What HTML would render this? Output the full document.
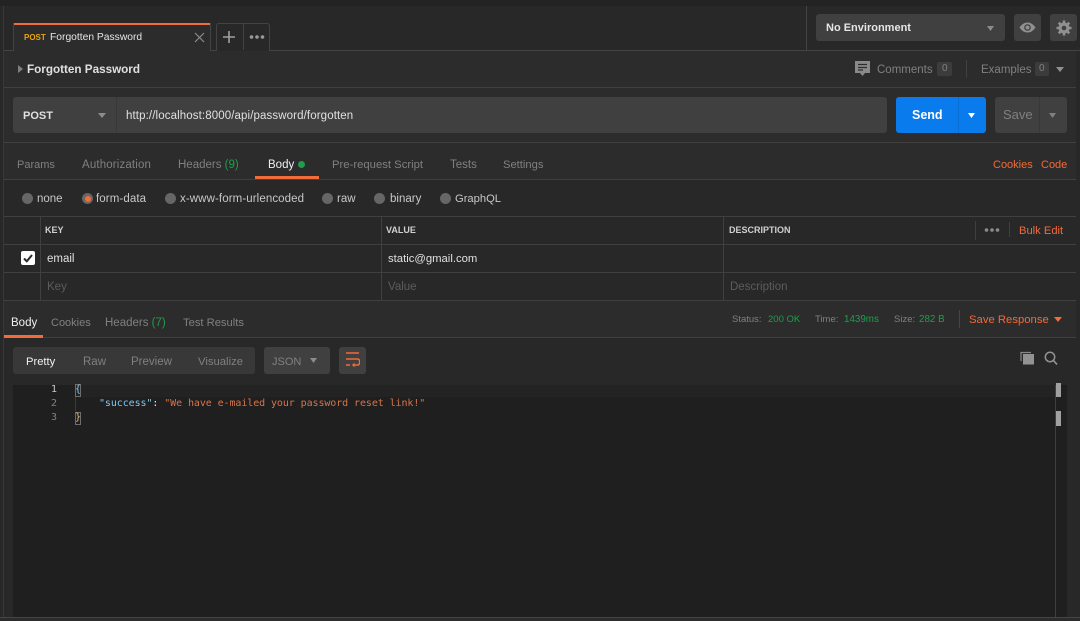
<!DOCTYPE html>
<html><head><meta charset="utf-8">
<style>
*{box-sizing:border-box}
html,body{margin:0;padding:0;width:1080px;height:621px;overflow:hidden;background:#282828}
body{position:relative;font-family:"Liberation Sans",sans-serif;font-size:11.5px;color:#808080}
.b,.t,svg.i{position:absolute}
.t{white-space:nowrap;line-height:14px;height:14px}
.w{color:#f0f0f0}
.o{color:#f26b3a}
.g{color:#1f9e4a}
.d{color:#5c5c5c}
.s{font-weight:bold}
.r{position:absolute;width:11px;height:11px;border-radius:50%;background:#666;top:193px}
.m{font:10px/14px "DejaVu Sans Mono",monospace;letter-spacing:-0.09px}
</style></head><body>
<!-- backgrounds -->
<div class="b" style="left:0;top:0;width:1080px;height:6px;background:#232323"></div>
<div class="b" style="left:0;top:6px;width:1080px;height:44px;background:#282828"></div>
<div class="b" style="left:4px;top:51px;width:1072px;height:129px;background:#2c2c2c"></div>
<div class="b" style="left:4px;top:180px;width:1072px;height:121px;background:#282828"></div>
<div class="b" style="left:4px;top:301px;width:1072px;height:37px;background:#2c2c2c"></div>
<div class="b" style="left:4px;top:338px;width:1072px;height:279px;background:#282828"></div>
<div class="b" style="left:0;top:617px;width:1080px;height:4px;background:#2c2c2c"></div>
<!-- lines -->
<div class="b" style="left:3px;top:6px;width:1px;height:611px;background:#383838"></div>
<div class="b" style="left:4px;top:50px;width:1076px;height:1px;background:#434343"></div>
<div class="b" style="left:806px;top:6px;width:1px;height:44px;background:#434343"></div>
<div class="b" style="left:4px;top:87px;width:1072px;height:1px;background:#404040"></div>
<div class="b" style="left:4px;top:142px;width:1072px;height:1px;background:#404040"></div>
<div class="b" style="left:4px;top:179px;width:1072px;height:1px;background:#404040"></div>
<div class="b" style="left:4px;top:216px;width:1072px;height:1px;background:#404040"></div>
<div class="b" style="left:4px;top:244px;width:1072px;height:1px;background:#404040"></div>
<div class="b" style="left:4px;top:272px;width:1072px;height:1px;background:#404040"></div>
<div class="b" style="left:4px;top:300px;width:1072px;height:1px;background:#404040"></div>
<div class="b" style="left:4px;top:337px;width:1072px;height:1px;background:#404040"></div>
<div class="b" style="left:0;top:617px;width:1080px;height:1px;background:#454545"></div>
<div class="b" style="left:40px;top:216px;width:1px;height:84px;background:#404040"></div>
<div class="b" style="left:381px;top:216px;width:1px;height:84px;background:#404040"></div>
<div class="b" style="left:723px;top:216px;width:1px;height:84px;background:#404040"></div>
<!-- tab strip -->
<div class="b" style="left:13px;top:23px;width:198px;height:28px;background:#2c2c2c;border:1px solid #434343;border-bottom:0;border-top:0"></div>
<div class="b" style="left:14px;top:23px;width:196px;height:2px;background:#f26b3a"></div>
<div class="t s" style="left:24px;top:31px;font-size:8px;color:#e8a50c">POST</div>
<div class="t" style="left:50px;top:31px;font-size:10.3px;color:#e6e6e6">Forgotten Password</div>
<svg class="i" style="left:194px;top:32px" width="11" height="11" viewBox="0 0 11 11"><path d="M1 1l9 9M10 1l-9 9" stroke="#8c8c8c" stroke-width="1.2" fill="none"/></svg>
<div class="b" style="left:216px;top:23px;width:54px;height:28px;border:1px solid #434343;border-bottom:0;border-radius:3px 3px 0 0;background:#282828"></div>
<div class="b" style="left:243px;top:23px;width:1px;height:27px;background:#434343"></div>
<svg class="i" style="left:223px;top:31px" width="12" height="12" viewBox="0 0 12 12"><path d="M6 0v12M0 6h12" stroke="#a0a0a0" stroke-width="1.6" fill="none"/></svg>
<svg class="i" style="left:249px;top:34px" width="16" height="6" viewBox="0 0 16 6"><circle cx="2.500" cy="3" r="1.800" fill="#9a9a9a"/><circle cx="8" cy="3" r="1.800" fill="#9a9a9a"/><circle cx="13.500" cy="3" r="1.800" fill="#9a9a9a"/></svg>
<!-- environment -->
<div class="b" style="left:816px;top:14px;width:189px;height:27px;background:#404040;border-radius:3px"></div>
<div class="t s" style="left:826px;top:21px;font-size:11px;color:#e6e6e6">No Environment</div>
<svg class="i" style="left:987px;top:26px" width="7" height="5" viewBox="0 0 8 5" preserveAspectRatio="none"><path d="M0 0h8L4 5z" fill="#8c8c8c"/></svg>
<div class="b" style="left:1014px;top:14px;width:27px;height:27px;background:#404040;border-radius:3px"></div>
<svg class="i" style="left:1019px;top:22px" width="17" height="11" viewBox="0 0 17 11"><path d="M0.500 5.500C3 2 5.500 .5 8.500 .5s5.500 1.500 8 5c-2.500 3.500-5 5-8 5s-5.500-1.500-8-5z" fill="#909090"/><circle cx="8.500" cy="5.500" r="3.300" fill="#404040"/><circle cx="8.500" cy="5.500" r="2" fill="#909090"/></svg>
<div class="b" style="left:1050px;top:14px;width:27px;height:27px;background:#404040;border-radius:3px"></div>
<svg class="i" style="left:1056px;top:20px" width="16" height="16" viewBox="0 0 16 16"><circle cx="8" cy="8" r="4" fill="none" stroke="#909090" stroke-width="3"/><path d="M8 0.500v15M0.500 8h15M2.700 2.700l10.600 10.600M13.300 2.700L2.700 13.300" stroke="#909090" stroke-width="2.600"/><circle cx="8" cy="8" r="2.300" fill="#404040"/></svg>
<!-- title row -->
<svg class="i" style="left:18px;top:65px" width="5" height="8" viewBox="0 0 5 8"><path d="M0 0l5 4-5 4z" fill="#808080"/></svg>
<div class="t s" style="left:27px;top:63px;font-size:11.7px;color:#e0e0e0">Forgotten Password</div>
<svg class="i" style="left:855px;top:61px" width="15" height="16" viewBox="0 0 15 16"><path d="M0 0h15v12H10l-2.500 3-2.500-3H0z" fill="#8a8a8a"/><path d="M3 3.500h9M3 6.500h9M3 9h5" stroke="#2c2c2c" stroke-width="1.200"/></svg>
<div class="t" style="left:877px;top:63px;font-size:11.500px">Comments</div>
<div class="b" style="left:937px;top:62px;width:15px;height:14px;background:#3c3c3c;border-radius:2px"></div>
<div class="t" style="left:942px;top:62px;font-size:10px;color:#808080">0</div>
<div class="b" style="left:966px;top:60px;width:1px;height:18px;background:#404040"></div>
<div class="t" style="left:981px;top:63px;font-size:11.500px">Examples</div>
<div class="b" style="left:1035px;top:62px;width:14px;height:14px;background:#3c3c3c;border-radius:2px"></div>
<div class="t" style="left:1039px;top:62px;font-size:10px;color:#808080">0</div>
<svg class="i" style="left:1056px;top:67px" width="8" height="5" viewBox="0 0 8 5"><path d="M0 0h8L4 5z" fill="#909090"/></svg>
<!-- URL row -->
<div class="b" style="left:13px;top:97px;width:874px;height:36px;background:#404040;border-radius:3px"></div>
<div class="b" style="left:116px;top:97px;width:1px;height:36px;background:#383838"></div>
<div class="t s" style="left:23px;top:109px;font-size:11px;color:#e0e0e0">POST</div>
<svg class="i" style="left:98px;top:113px" width="8" height="5" viewBox="0 0 8 5"><path d="M0 0h8L4 5z" fill="#8c8c8c"/></svg>
<div class="t" style="left:126px;top:109px;font-size:11.500px;letter-spacing:.11px;color:#e0e0e0">http://localhost:8000/api/password/forgotten</div>
<div class="b" style="left:896px;top:97px;width:90px;height:36px;background:#097bed;border-radius:3px"></div>
<div class="b" style="left:958px;top:97px;width:1px;height:36px;background:#0a6fd4"></div>
<div class="t s" style="left:912px;top:108px;font-size:12.500px;color:#fff">Send</div>
<svg class="i" style="left:968px;top:113px" width="7" height="5" viewBox="0 0 8 5" preserveAspectRatio="none"><path d="M0 0h8L4 5z" fill="#fff"/></svg>
<div class="b" style="left:995px;top:97px;width:72px;height:36px;background:#404040;border-radius:3px"></div>
<div class="b" style="left:1039px;top:97px;width:1px;height:36px;background:#383838"></div>
<div class="t" style="left:1003px;top:108px;font-size:13px;color:#808080">Save</div>
<svg class="i" style="left:1049px;top:113px" width="7" height="5" viewBox="0 0 8 5" preserveAspectRatio="none"><path d="M0 0h8L4 5z" fill="#808080"/></svg>
<!-- request tabs -->
<div class="t" style="left:17px;top:158px;font-size:11px">Params</div>
<div class="t" style="left:82px;top:158px;letter-spacing:.15px">Authorization</div>
<div class="t" style="left:178px;top:158px">Headers <span class="g">(9)</span></div>
<div class="t w" style="left:268px;top:158px">Body</div>
<div class="b" style="left:298px;top:161px;width:7px;height:7px;border-radius:50%;background:#1f9e4a"></div>
<div class="b" style="left:255px;top:176px;width:64px;height:3px;background:#f26b3a"></div>
<div class="t" style="left:332px;top:158px;font-size:11.300px">Pre-request Script</div>
<div class="t" style="left:450px;top:158px">Tests</div>
<div class="t" style="left:503px;top:158px;font-size:11.200px">Settings</div>
<div class="t o" style="left:993px;top:158px;font-size:11px">Cookies</div>
<div class="t o" style="left:1041px;top:158px;font-size:11px">Code</div>
<!-- radios -->
<div class="r" style="left:22px"></div><div class="t" style="left:37px;top:192px;color:#c8c8c8">none</div>
<div class="r" style="left:82px"></div><div class="b" style="left:84.500px;top:195.500px;width:6px;height:6px;border-radius:50%;background:#f26b3a"></div><div class="t" style="left:96px;top:192px;color:#c8c8c8;letter-spacing:.1px">form-data</div>
<div class="r" style="left:165px"></div><div class="t" style="left:180px;top:192px;color:#c8c8c8;letter-spacing:.1px">x-www-form-urlencoded</div>
<div class="r" style="left:322px"></div><div class="t" style="left:337px;top:192px;color:#c8c8c8">raw</div>
<div class="r" style="left:374px"></div><div class="t" style="left:390px;top:192px;color:#c8c8c8">binary</div>
<div class="r" style="left:440px"></div><div class="t" style="left:455px;top:192px;color:#c8c8c8;font-size:11.200px">GraphQL</div>
<!-- table -->
<div class="t s" style="left:45px;top:223px;font-size:9px;color:#d0d0d0">KEY</div>
<div class="t s" style="left:386px;top:223px;font-size:9px;color:#d0d0d0">VALUE</div>
<div class="t s" style="left:729px;top:223px;font-size:9px;color:#d0d0d0">DESCRIPTION</div>
<div class="b" style="left:975px;top:221px;width:1px;height:19px;background:#404040"></div>
<svg class="i" style="left:984px;top:227px" width="16" height="6" viewBox="0 0 16 6"><circle cx="2.500" cy="3" r="1.800" fill="#8c8c8c"/><circle cx="8" cy="3" r="1.800" fill="#8c8c8c"/><circle cx="13.500" cy="3" r="1.800" fill="#8c8c8c"/></svg>
<div class="b" style="left:1009px;top:222px;width:1px;height:15px;background:#404040"></div>
<div class="t o" style="left:1019px;top:224px;font-size:11.200px">Bulk Edit</div>
<div class="b" style="left:21px;top:251px;width:14px;height:14px;background:#fff;border-radius:2px"></div>
<svg class="i" style="left:21px;top:251px" width="14" height="14" viewBox="0 0 14 14"><path d="M3 7.500l2.800 2.800L11 4" stroke="#282828" stroke-width="2" fill="none"/></svg>
<div class="t" style="left:47px;top:252px;color:#e0e0e0">email</div>
<div class="t" style="left:388px;top:252px;color:#e0e0e0;font-size:11.300px">static@gmail.com</div>
<div class="t d" style="left:47px;top:280px">Key</div>
<div class="t d" style="left:388px;top:280px">Value</div>
<div class="t d" style="left:730px;top:280px">Description</div>
<!-- response tabs -->
<div class="t w" style="left:11px;top:316px">Body</div>
<div class="b" style="left:4px;top:335px;width:39px;height:3px;background:#f26b3a"></div>
<div class="t" style="left:51px;top:316px;font-size:11px">Cookies</div>
<div class="t" style="left:105px;top:316px">Headers <span class="g">(7)</span></div>
<div class="t" style="left:183px;top:316px;font-size:11.200px">Test Results</div>
<div class="t" style="left:732px;top:313px;font-size:9.500px">Status:</div>
<div class="t g" style="left:768px;top:313px;font-size:9.500px">200 OK</div>
<div class="t" style="left:815px;top:313px;font-size:9.500px">Time:</div>
<div class="t g" style="left:844px;top:313px;font-size:9.800px">1439ms</div>
<div class="t" style="left:894px;top:313px;font-size:9.500px">Size:</div>
<div class="t g" style="left:919px;top:313px;font-size:9.800px">282 B</div>
<div class="b" style="left:959px;top:310px;width:1px;height:18px;background:#454545"></div>
<div class="t o" style="left:969px;top:313px;font-size:11.300px">Save Response</div>
<svg class="i" style="left:1054px;top:317px" width="8" height="5" viewBox="0 0 8 5"><path d="M0 0h8L4 5z" fill="#f26b3a"/></svg>
<!-- toolbar -->
<div class="b" style="left:13px;top:347px;width:242px;height:27px;background:#383838;border-radius:3px"></div>
<div class="t w" style="left:26px;top:355px;font-size:11.200px">Pretty</div>
<div class="t" style="left:83px;top:355px">Raw</div>
<div class="t" style="left:131px;top:355px">Preview</div>
<div class="t" style="left:198px;top:355px;font-size:11.300px">Visualize</div>
<div class="b" style="left:264px;top:347px;width:66px;height:27px;background:#404040;border-radius:3px"></div>
<div class="t" style="left:272px;top:355px;font-size:11px">JSON</div>
<svg class="i" style="left:310px;top:358px" width="7" height="5" viewBox="0 0 8 5" preserveAspectRatio="none"><path d="M0 0h8L4 5z" fill="#8c8c8c"/></svg>
<div class="b" style="left:339px;top:347px;width:27px;height:27px;background:#404040;border-radius:3px"></div>
<svg class="i" style="left:345px;top:351px" width="15" height="17" viewBox="0 0 15 17"><path d="M1 2h13M1 8h12a1.700 3 0 0 1 0 6H8M1 14h4" stroke="#f26b3a" stroke-width="1.500" fill="none"/><path d="M9.500 11.500L7 14l2.500 2.500z" fill="#f26b3a"/></svg>
<svg class="i" style="left:1020px;top:351px" width="15" height="14" viewBox="0 0 15 14"><path d="M1 10V1.500h10" stroke="#888" stroke-width="1.200" fill="none"/><rect x="3" y="3" width="11" height="10.500" fill="#929292"/></svg>
<svg class="i" style="left:1044px;top:351px" width="14" height="15" viewBox="0 0 14 15"><circle cx="6" cy="6" r="4.700" fill="none" stroke="#929292" stroke-width="1.500"/><path d="M9.500 9.500L13 13.500" stroke="#929292" stroke-width="1.700"/></svg>
<!-- code -->
<div class="b" style="left:13px;top:385px;width:1054px;height:232px;background:#1f1f1f"></div>
<div class="b" style="left:75px;top:385px;width:980px;height:12px;background:#232323"></div>
<div class="b" style="left:1055px;top:385px;width:1px;height:232px;background:#404040"></div>
<div class="t m" style="left:51px;top:383px;color:#c8c8c8">1</div>
<div class="t m" style="left:51px;top:397px;color:#808080">2</div>
<div class="t m" style="left:51px;top:411px;color:#808080">3</div>
<div class="b" style="left:75px;top:397px;width:1px;height:14px;background:#3a3a3a"></div>
<div class="b" style="left:75px;top:384px;width:6px;height:13px;border:1px solid #6e6e6e"></div>
<div class="b" style="left:75px;top:412px;width:6px;height:13px;border:1px solid #6e6e6e"></div>
<div class="t m" style="left:75px;top:383px;color:#8fc8e8">{</div>
<div class="t m" style="left:75px;top:411px;color:#e0c080">}</div>
<div class="t m" style="left:99px;top:397px;color:#e0e0e0;white-space:pre"><span style="color:#7fc8f0">"success"</span>: <span style="color:#d8744a">"We have e-mailed your password reset link!"</span></div>
<div class="b" style="left:1056px;top:383px;width:5px;height:14px;background:#a0a0a0"></div>
<div class="b" style="left:1056px;top:411px;width:5px;height:15px;background:#a0a0a0"></div>
</body></html>
